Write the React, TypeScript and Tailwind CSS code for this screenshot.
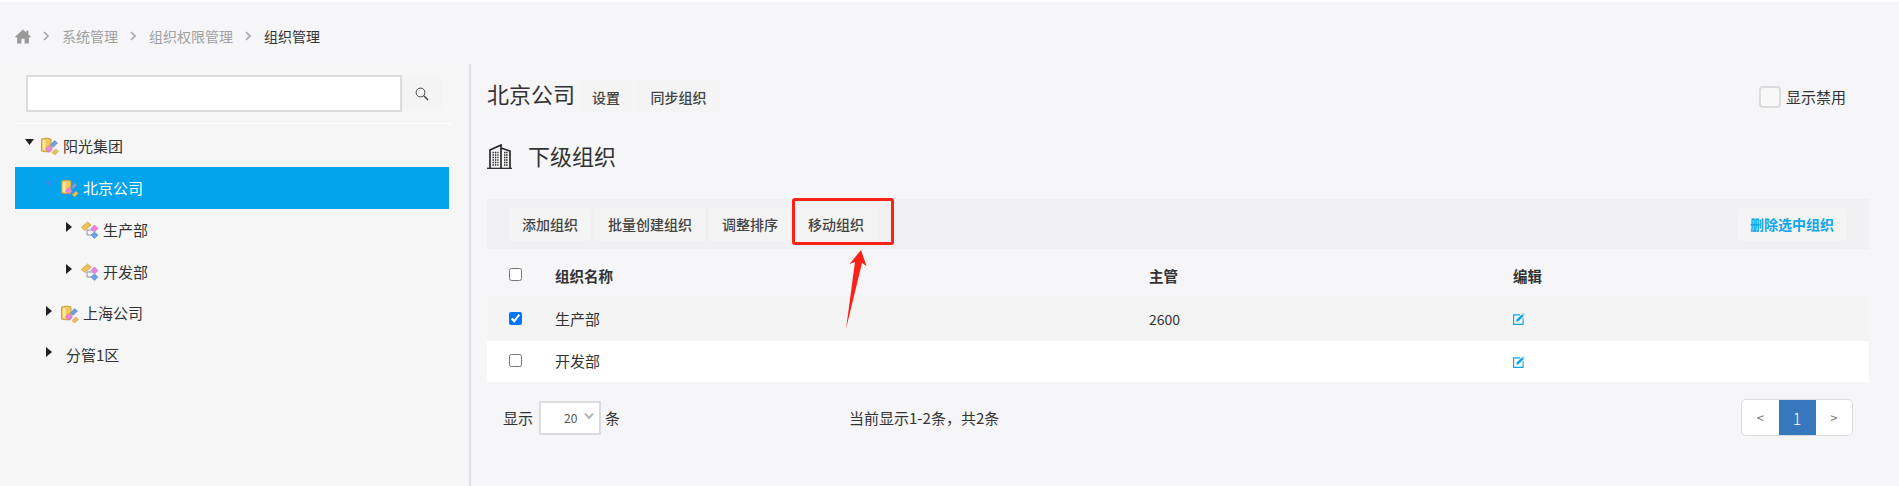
import React from "react";

const FONT = "font-['Noto_Sans_CJK_SC','Noto_Sans',sans-serif]";

function Home() {
  return (
    <svg width="16" height="15" viewBox="0 0 15 14" className="shrink-0">
      <path d="M7.5 0.5 L0 7.2 L1 8.2 L2 7.4 V13.5 H6 V9 H9 V13.5 H13 V7.4 L14 8.2 L15 7.2 L12.5 5 V1.5 H10.5 V3.2 Z" fill="#9a9a9a" />
    </svg>
  );
}

function Crumb() {
  return (
    <svg width="6" height="10" viewBox="0 0 6 10" className="shrink-0">
      <path d="M1 1 L5 5 L1 9" fill="none" stroke="#a8a8a8" strokeWidth="1.6" />
    </svg>
  );
}

function Search() {
  return (
    <svg width="14" height="14" viewBox="0 0 14 14">
      <circle cx="5.5" cy="5.5" r="4.4" fill="none" stroke="#444" strokeWidth="1" />
      <path d="M8.8 8.8 L13 13" stroke="#444" strokeWidth="1.5" />
    </svg>
  );
}

function OrgIcon() {
  return (
    <svg width="18" height="18" viewBox="0 0 18 18" className="shrink-0 mr-[4px]">
      <path d="M0.5 2 Q5 0.2 10 2 V14 Q5 15.8 0.5 14 Z" fill="#f2c95c" stroke="#b9933c" strokeWidth="0.8" />
      <rect x="2" y="3" width="2.5" height="10" fill="#fbe7a6" />
      <path d="M13.5 3.5 L16.5 6 L12 10.5 L9.5 8 Z" fill="#6f9fdc" stroke="#4c79b5" strokeWidth="0.5" />
      <path d="M8 8.5 L11.5 12 L8 15.5 L4.5 12 Z" fill="#ea84dc" stroke="#c05ab0" strokeWidth="0.5" />
      <path d="M15 12 L17.5 14.5 L13.5 18 L11 15.5 Z" fill="#eec05c" stroke="#b38a30" strokeWidth="0.5" />
    </svg>
  );
}

function DeptIcon() {
  return (
    <svg width="18" height="18" viewBox="0 0 18 18" className="shrink-0 mr-[4px]">
      <path d="M6 9 V14 H11 M6 9 H12" fill="none" stroke="#8a94a8" strokeWidth="1" />
      <path d="M6.5 1 L10 4 L4 9.5 L0.5 6.5 Z" fill="#efc352" stroke="#b38a30" strokeWidth="0.6" />
      <path d="M13.5 4 L17 7.5 L13.5 11 L10 7.5 Z" fill="#ea84dc" stroke="#c05ab0" strokeWidth="0.5" />
      <path d="M13.5 11 L17 14 L13.5 17.5 L10 14 Z" fill="#6ba3e4" stroke="#4c79b5" strokeWidth="0.5" />
    </svg>
  );
}

function Tri({ down, blue }: { down?: boolean; blue?: boolean }) {
  return (
    <svg width="16" height="10" viewBox="0 0 16 10" className="shrink-0 -translate-y-[3px]">
      {down ? (
        <path d="M0 1 H9 L4.5 7 Z" fill={blue ? "#2f8df5" : "#222"} />
      ) : (
        <path d="M0 0 L6 5 L0 10 Z" fill="#222" />
      )}
    </svg>
  );
}

function Building() {
  return (
    <svg width="26" height="26" viewBox="0 0 26 26" className="shrink-0">
      <path d="M3 25 V7 L14 2 V25" fill="none" stroke="#1f1f1f" strokeWidth="1.6" />
      <path d="M14 5 L23 8 V25" fill="none" stroke="#1f1f1f" strokeWidth="1.6" />
      <path d="M0 25.3 H25" stroke="#1f1f1f" strokeWidth="1.2" />
      <path d="M5.5 9.5 H11.5 M5.5 12 H11.5 M5.5 14.5 H11.5 M5.5 17 H11.5 M5.5 19.5 H11.5 M5.5 22 H11.5" stroke="#1f1f1f" strokeWidth="1.4" strokeDasharray="1.4 1" />
      <path d="M17 9.5 H20.5 M17 12 H20.5 M17 14.5 H20.5 M17 17 H20.5 M17 19.5 H20.5 M17 22 H20.5" stroke="#1f1f1f" strokeWidth="1.4" strokeDasharray="1.4 0.7" />
    </svg>
  );
}

function EditIcon() {
  return (
    <svg width="12" height="12" viewBox="0 0 12 12">
      <path d="M7 1.9 H0.6 V11.4 H10.1 V5.2" fill="none" stroke="#0ca5ee" strokeWidth="1.1" />
      <path d="M3.3 8.7 L3.7 6.5 L9 1.2 L10.8 3 L5.5 8.3 Z" fill="#0ca5ee" />
      <path d="M9.8 0.4 L11.6 2.2" stroke="#0ca5ee" strokeWidth="0.9" />
    </svg>
  );
}

function Btn({ children, blue }: { children: React.ReactNode; blue?: boolean }) {
  return (
    <button
      className={
        blue
          ? "h-[33px] px-[13px] rounded-[4px] bg-[#f4f4f5] text-[14px] font-bold text-[#0ca5ee] whitespace-nowrap"
          : "h-[33px] px-[13px] rounded-[4px] bg-[#f4f4f5] text-[14px] font-medium text-[#444] whitespace-nowrap"
      }
    >
      {children}
    </button>
  );
}

export default function App() {
  return (
    <div className={`relative h-[486px] w-[1899px] overflow-hidden bg-[#f6f6f8] text-[#333] ${FONT}`}>
      <div className="h-[2px] bg-[#fdfdfd]" />
      {/* breadcrumb */}
      <div className="h-[62px] pl-[15px] pt-[6px] flex items-center text-[14px]">
        <Home />
        <span className="ml-[12px]"><Crumb /></span>
        <span className="ml-[13px] text-[#a0a0a0]">系统管理</span>
        <span className="ml-[12px]"><Crumb /></span>
        <span className="ml-[13px] text-[#a0a0a0]">组织权限管理</span>
        <span className="ml-[12px]"><Crumb /></span>
        <span className="ml-[13px] text-[#333]">组织管理</span>
      </div>

      <div className="flex h-[422px]">
        {/* sidebar */}
        <aside className="w-[471px] shrink-0 bg-[#f6f6f7] border-r-[2px] border-[#dedee0] pt-[11px]">
          <div className="flex items-center pl-[26px]">
            <input className="w-[376px] h-[37px] bg-white border-2 border-[#dcdcdc] outline-none" />
            <div className="w-[40px] h-[33px] bg-[#f4f4f5] flex items-center justify-center">
              <Search />
            </div>
          </div>
          <div className="mt-[11px] ml-[15px] w-[436px] h-[1px] bg-[#ffffff]" />
          <div className="mt-[1px] ml-[15px] w-[434px] text-[15px]">
            <div className="h-[42px] pl-[10px] flex items-center">
              <Tri down />
              <OrgIcon />
              <span>阳光集团</span>
            </div>
            <div className="h-[42px] pl-[30px] flex items-center bg-[#03a4ec] text-white">
              <Tri down blue />
              <OrgIcon />
              <span>北京公司</span>
            </div>
            <div className="h-[42px] pl-[51px] flex items-center">
              <span className="w-[15px] shrink-0"><Tri /></span>
              <DeptIcon />
              <span>生产部</span>
            </div>
            <div className="h-[42px] pl-[51px] flex items-center">
              <span className="w-[15px] shrink-0"><Tri /></span>
              <DeptIcon />
              <span>开发部</span>
            </div>
            <div className="h-[41px] pl-[31px] flex items-center">
              <span className="w-[15px] shrink-0"><Tri /></span>
              <OrgIcon />
              <span>上海公司</span>
            </div>
            <div className="h-[42px] pl-[31px] flex items-center">
              <span className="w-[20px] shrink-0"><Tri /></span>
              <span>分管1区</span>
            </div>
          </div>
        </aside>

        {/* main */}
        <main className="flex-1 pl-[16px] pr-[30px] pt-[17px]">
          <div className="flex items-center h-[32px]">
            <h1 className="text-[22px] leading-[32px] font-normal text-[#333] mr-[5px] -translate-y-[4px]">北京公司</h1>
            <button className="h-[32px] w-[52px] rounded-[4px] bg-[#f4f4f5] text-[14px] font-medium text-[#444]">设置</button>
            <button className="ml-[5px] h-[32px] w-[83px] rounded-[4px] bg-[#f4f4f5] text-[14px] font-medium text-[#444]">同步组织</button>
            <label className="ml-auto mr-[23px] flex items-center text-[15px]">
              <span className="w-[22px] h-[22px] rounded-[4px] border-2 border-[#dcdcdc] bg-[#f8f8f9] mr-[5px]" />
              显示禁用
            </label>
          </div>

          <div className="mt-[30px] flex items-center h-[26px]">
            <Building />
            <h2 className="ml-[15px] text-[22px] leading-[26px] font-normal text-[#333] -translate-y-[1px]">下级组织</h2>
          </div>

          <div className="mt-[30px] h-[50px] bg-[#f0f0f2] flex items-center pl-[22px] pr-[22px] gap-[4px]">
            <Btn>添加组织</Btn>
            <Btn>批量创建组织</Btn>
            <Btn>调整排序</Btn>
            <Btn>移动组织</Btn>
            <span className="ml-auto"><Btn blue>删除选中组织</Btn></span>
          </div>

          <div className="grid grid-cols-[68px_594px_364px_1fr] items-center h-[48px] pt-[6px] text-[14.5px] font-bold">
            <span className="pl-[22px] flex items-center -translate-y-[2px]"><input type="checkbox" className="w-[13px] h-[13px] m-0" /></span>
            <span>组织名称</span>
            <span>主管</span>
            <span>编辑</span>
          </div>
          <div className="grid grid-cols-[68px_594px_364px_1fr] items-center h-[44px] bg-[#f4f4f5] text-[15px]">
            <span className="pl-[22px] flex items-center -translate-y-[1px]"><input type="checkbox" defaultChecked className="w-[13px] h-[13px] m-0" /></span>
            <span>生产部</span>
            <span className="text-[14px]">2600</span>
            <span className="flex"><EditIcon /></span>
          </div>
          <div className="grid grid-cols-[68px_594px_364px_1fr] items-center h-[41px] bg-white text-[15px]">
            <span className="pl-[22px] flex items-center -translate-y-[1px]"><input type="checkbox" className="w-[13px] h-[13px] m-0" /></span>
            <span>开发部</span>
            <span />
            <span className="flex"><EditIcon /></span>
          </div>

          <div className="mt-[17px] flex items-center h-[37px] pl-[16px] pr-[16px] text-[15px]">
            <span className="translate-y-[1px]">显示</span>
            <div className="ml-[6px] w-[62px] h-[34px] bg-white border-2 border-[#dcdcde] flex items-center pl-[23px] text-[12px] text-[#555]">
              <span>20</span>
              <svg width="10" height="8" viewBox="0 0 10 8" className="ml-[7px] -translate-y-[2px]">
                <path d="M1 1.5 L5 6 L9 1.5" fill="none" stroke="#b5b5b5" strokeWidth="2" />
              </svg>
            </div>
            <span className="ml-[4px] translate-y-[1px]">条</span>
            <span className="ml-[229px] translate-y-[1px]">当前显示1-2条，共2条</span>
            <div className="ml-auto h-[37px] w-[112px] flex items-stretch rounded-[5px] border border-[#dddddf] bg-white overflow-hidden">
              <span className="flex-1 flex items-center justify-center text-[13px] text-[#777]">&lt;</span>
              <span className="w-[37px] flex items-center justify-center bg-[#3777bc] text-white text-[16px] font-light">1</span>
              <span className="flex-1 flex items-center justify-center text-[13px] text-[#777]">&gt;</span>
            </div>
          </div>
        </main>
      </div>

      {/* annotation */}
      <div className="absolute left-[792px] top-[198px] w-[102px] h-[47px] border-[3px] border-[#fb2116] rounded-[3px]" />
      <svg className="absolute left-[840px] top-[245px]" width="32" height="90" viewBox="0 0 32 90">
        <path d="M21 5 L26.5 21 L22 18 L6 84 L15 17 L9.5 19 Z" fill="#fb2116" />
      </svg>
    </div>
  );
}
